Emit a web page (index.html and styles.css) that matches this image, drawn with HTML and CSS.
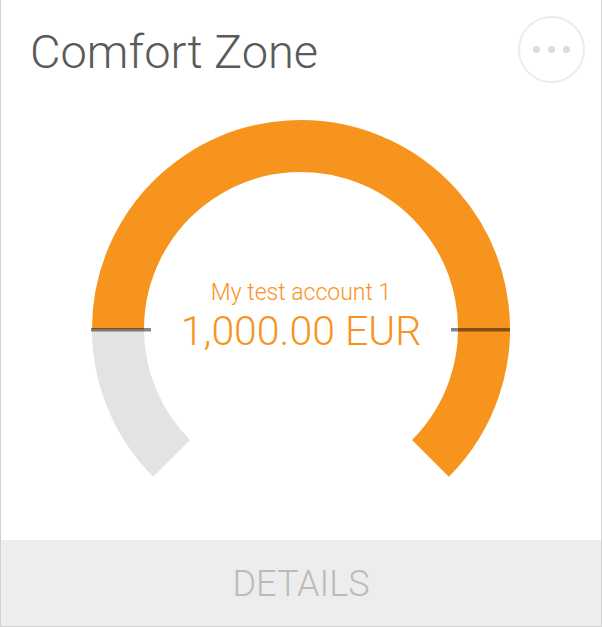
FILE: index.html
```html
<!DOCTYPE html>
<html>
<head>
<meta charset="utf-8">
<link rel="stylesheet" href="styles.css">
</head>
<body>
<div class="card">
  <div class="header">
    <h1 class="title">Comfort Zone</h1>
    <button class="more" aria-label="More">
      <span class="dot"></span><span class="dot"></span><span class="dot"></span>
    </button>
  </div>
  <div class="gauge">
    <svg class="gauge-svg" width="600" height="440" viewBox="0 0 600 440">
      <path d="M 117 229 A 183 183 0 0 0 170.6 358.4" fill="none" stroke="#e3e3e3" stroke-width="52"/>
      <path d="M 117 229 A 183 183 0 1 1 429.4 358.4" fill="none" stroke="#f7941e" stroke-width="52"/>
      <rect x="90" y="228" width="60" height="3.5" fill="rgba(0,0,0,0.47)"/>
      <rect x="450" y="228" width="59" height="3.5" fill="rgba(0,0,0,0.47)"/>
    </svg>
    <div class="gauge-label">
      <div class="account">My test account 1</div>
      <div class="amount">1,000.00 EUR</div>
    </div>
  </div>
  <div class="details">DETAILS</div>
</div>
</body>
</html>
```

FILE: styles.css
```css
html, body {
  margin: 0;
  padding: 0;
  background: #ffffff;
}

body {
  font-family: Roboto, "Liberation Sans", sans-serif;
  font-weight: 300;
}

.card {
  width: 600px;
  height: 626px;
  border: 1px solid #d2d2d2;
  border-top: none;
  display: flex;
  flex-direction: column;
  background: #fff;
}

.header {
  height: 100px;
  display: flex;
  justify-content: space-between;
  align-items: flex-start;
  padding: 0 16px 0 29px;
}

.title {
  margin: 0;
  padding-top: 28px;
  font-size: 47px;
  line-height: 1;
  font-weight: 300;
  color: #5a5a5a;
}

.more {
  margin-top: 16px;
  width: 67px;
  height: 67px;
  border-radius: 50%;
  border: 2px solid #ececec;
  background: #fff;
  display: flex;
  align-items: center;
  justify-content: center;
  gap: 8px;
  padding: 0;
}

.dot {
  width: 7px;
  height: 7px;
  border-radius: 50%;
  background: #dcdcdc;
}

.gauge {
  position: relative;
  height: 440px;
}

.gauge-svg {
  display: block;
}

.gauge-label {
  position: absolute;
  left: 0;
  right: 0;
  top: 178px;
  text-align: center;
  color: #f7941e;
}

.account {
  font-size: 23px;
  line-height: 29px;
}

.amount {
  font-size: 41px;
  line-height: 48px;
}

.details {
  flex: 1;
  background: #ededed;
  color: #bbbbbb;
  font-size: 36px;
  display: flex;
  align-items: center;
  justify-content: center;
  padding-top: 2px;
}
```
